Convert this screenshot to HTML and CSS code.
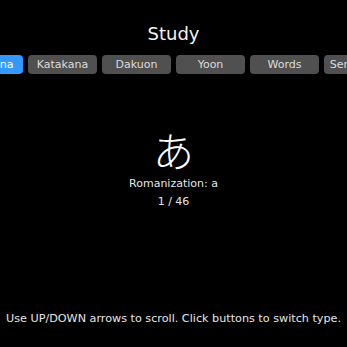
FILE: index.html
```html
<!DOCTYPE html>
<html lang="en">
<head>
    <meta charset="UTF-8">
    <meta name="viewport" content="width=device-width, initial-scale=1.0">
    <title>Study</title>
    <link rel="stylesheet" href="styles.css">
</head>
<body>

<h1 class="title">Study</h1>

<div class="tabs">
    <div class="tab-row">
        <button class="tab active">Hiragana</button>
        <button class="tab">Katakana</button>
        <button class="tab">Dakuon</button>
        <button class="tab">Yoon</button>
        <button class="tab">Words</button>
        <button class="tab">Sentences</button>
    </div>
</div>

<div class="card">
    <div class="kana">あ</div>
    <div class="info">Romanization: a</div>
    <div class="info">1 / 46</div>
</div>

<div class="hint">Use UP/DOWN arrows to scroll. Click buttons to switch type.</div>

</body>
</html>
```

FILE: styles.css
```css
html, body {
    margin: 0;
    padding: 0;
    background: #000;
}
body {
    height: 347px;
    overflow: hidden;
    display: flex;
    flex-direction: column;
    font-family: "DejaVu Sans", sans-serif;
    color: #e6e6e6;
}
.title {
    margin: 23px 0 0;
    font-size: 18px;
    font-weight: normal;
    line-height: 22px;
    text-align: center;
    color: #f2f2f2;
}
.tabs {
    margin-top: 10px;
    overflow: hidden;
}
.tab-row {
    display: flex;
    gap: 5px;
    margin-left: -46px;
}
.tab {
    flex-shrink: 0;
    width: 69px;
    height: 19px;
    padding: 0;
    border: none;
    border-radius: 4px;
    background: #505050;
    color: #dcdcdc;
    font-family: "DejaVu Sans", sans-serif;
    font-size: 11px;
    line-height: 19px;
    text-align: center;
    white-space: nowrap;
    overflow: hidden;
}
.tab.active {
    background: #3399ff;
    color: #fff;
}
.card {
    margin-top: 51px;
    display: flex;
    flex-direction: column;
    align-items: center;
}
.kana {
    font-family: "Noto Sans CJK JP", sans-serif;
    font-size: 41px;
    font-weight: 200;
    line-height: 48px;
    margin-bottom: 2px;
    color: #fff;
}
.info {
    font-size: 11px;
    line-height: 18px;
}
.hint {
    margin-top: auto;
    margin-bottom: 21px;
    font-size: 11.2px;
    line-height: 14px;
    text-align: center;
}
```
